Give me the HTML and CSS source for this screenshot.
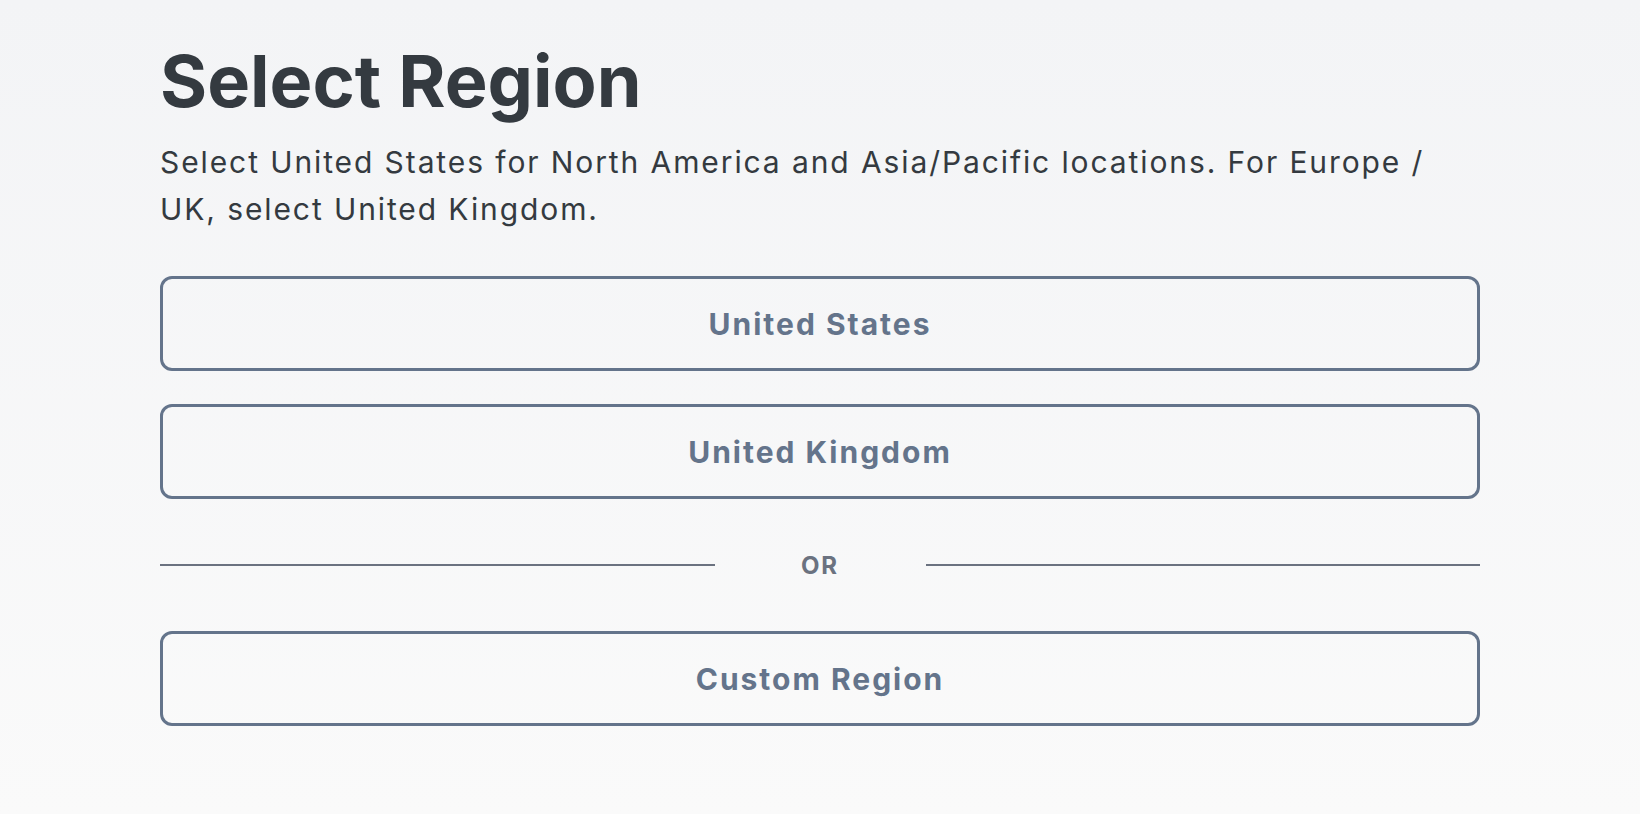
FILE: index.html
```html
<!DOCTYPE html>
<html lang="en">
<head>
<meta charset="utf-8">
<title>Select Region</title>
<link rel="stylesheet" href="styles.css">
</head>
<body>
<main class="page">
  <h1 class="title">Select Region</h1>
  <p class="intro">Select United States for North America and Asia/Pacific locations. For Europe / UK, select United Kingdom.</p>
  <div class="options">
    <button class="region-btn" type="button">United States</button>
    <button class="region-btn" type="button">United Kingdom</button>
  </div>
  <div class="divider"><span class="divider-line"></span><span class="divider-text">OR</span><span class="divider-line"></span></div>
  <button class="region-btn" type="button">Custom Region</button>
</main>
</body>
</html>
```

FILE: styles.css
```css
html, body {
  margin: 0;
  padding: 0;
  height: 100%;
}
body {
  background: linear-gradient(180deg, #f3f4f6 0%, #fafafa 100%);
  font-family: Inter, "Noto Sans", sans-serif;
  color: #343a40;
}
.page {
  width: 1320px;
  margin: 0 auto;
  padding-top: 38px;
  display: flex;
  flex-direction: column;
}
.title {
  margin: 0;
  font-size: 72px;
  line-height: 1.2;
  font-weight: 700;
  color: #343a40;
}
.intro {
  margin: 15px 0 0;
  font-size: 30px;
  line-height: 47px;
  font-weight: 400;
  letter-spacing: 1.9px;
  color: #343a40;
}
.options {
  margin-top: 43px;
  display: flex;
  flex-direction: column;
  gap: 33px;
}
.region-btn {
  box-sizing: border-box;
  width: 100%;
  height: 95px;
  padding: 1px 0 0;
  border: 3px solid #64748b;
  border-radius: 12px;
  background: transparent;
  font-family: Inter, "Noto Sans", sans-serif;
  font-size: 30px;
  font-weight: 700;
  letter-spacing: 2px;
  color: #64748b;
  cursor: pointer;
}
.divider {
  display: flex;
  align-items: center;
  height: 132px;
}
.divider-line {
  flex: 1;
  height: 2px;
  background: #6b7280;
}
.divider-text {
  width: 211px;
  text-align: center;
  font-size: 24px;
  font-weight: 700;
  color: #6b7280;
  letter-spacing: 1.8px;
}
```
